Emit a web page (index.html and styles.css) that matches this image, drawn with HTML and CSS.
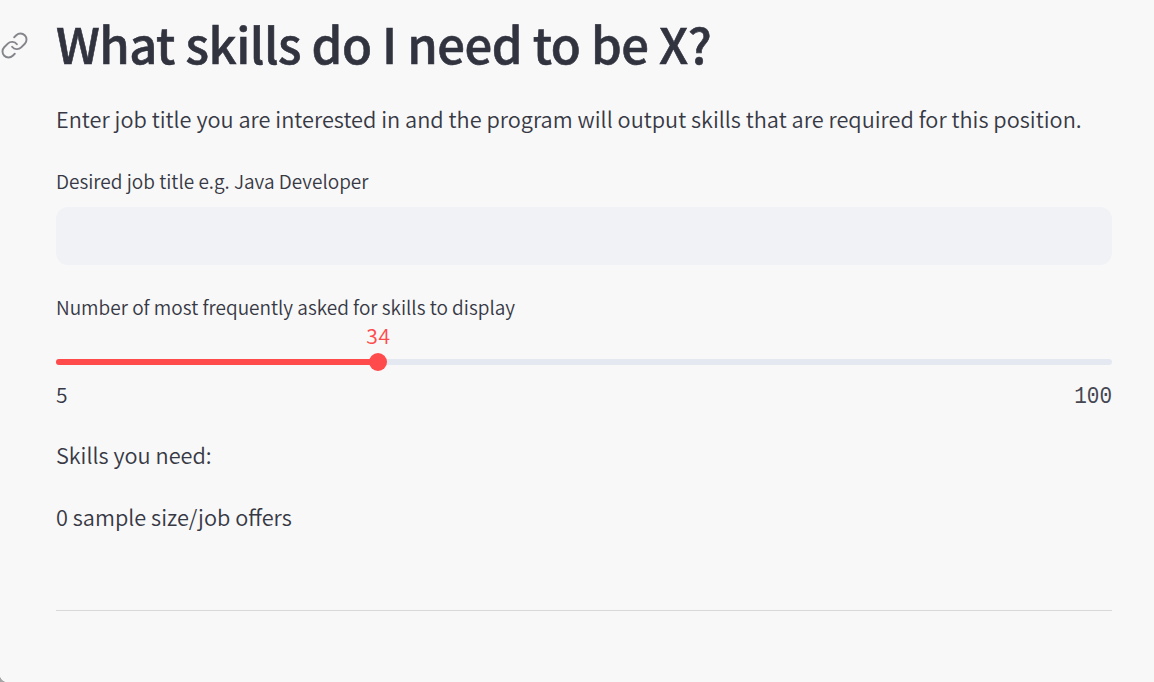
FILE: index.html
```html
<!DOCTYPE html>
<html lang="en">
<head>
<meta charset="utf-8">
<title>What skills do I need to be X?</title>
<link rel="stylesheet" href="styles.css">
</head>
<body>
<main class="page">
  <header class="heading">
    <a class="anchor" href="#top" aria-label="Link to heading">
      <svg viewBox="0 0 24 24" width="29" height="29"><path d="M10 13a5 5 0 0 0 7.54.54l3-3a5 5 0 0 0-7.07-7.07l-1.72 1.71"/><path d="M14 11a5 5 0 0 0-7.54-.54l-3 3a5 5 0 0 0 7.07 7.07l1.71-1.71"/></svg>
    </a>
    <h1 class="title" id="top"><span>What skills do I need to be X?</span></h1>
  </header>
  <p class="text intro"><span>Enter job title you are interested in and the program will output skills that are required for this position.</span></p>
  <label class="label" for="job"><span>Desired job title e.g. Java Developer</span></label>
  <input class="field" id="job" type="text">
  <div class="label label-slider"><span>Number of most frequently asked for skills to display</span></div>
  <div class="slider">
    <div class="value-row"><span class="value">34</span></div>
    <div class="track"><div class="fill"></div><div class="thumb"></div></div>
    <div class="limits"><span class="min">5</span><span class="max">100</span></div>
  </div>
  <p class="text skills"><span>Skills you need:</span></p>
  <p class="text sample"><span>0 sample size/job offers</span></p>
  <hr class="divider">
</main>
<div class="corner"></div>
</body>
</html>
```
FILE: styles.css
```css
* { box-sizing: border-box; }
body {
  margin: 0;
  height: 682px;
  overflow: hidden;
  background: #f8f8f8;
  color: #373945;
  font-family: "Noto Sans CJK JP", "Noto Sans", sans-serif;
  font-weight: 350;
}
.page { display: flex; flex-direction: column; padding: 3px 42px 0 56px; }
.heading { display: flex; align-items: center; height: 80px; margin-left: -56px; }
.anchor { display: flex; width: 56px; height: 29px; margin-top: 4px; }
.anchor svg { fill: none; stroke: #85868c; stroke-width: 1.6; stroke-linecap: round; stroke-linejoin: round; }
.title { margin: 0; color: #31333f; font-size: 49px; font-weight: 500; line-height: 80px; letter-spacing: -0.5px; white-space: nowrap; -webkit-text-stroke: 0.6px #31333f; }
.text { margin: 0; font-size: 21.73px; line-height: 38px; white-space: nowrap; }
.intro { margin-top: 17px; }
.label { margin-top: 26px; font-size: 19.02px; line-height: 34px; }
.field { width: 100%; height: 58px; margin-top: 9px; border: 0; border-radius: 12px; background: #f1f2f6; }
.label-slider { margin-top: 25px; }
.slider { display: flex; flex-direction: column; }
.value-row { display: flex; justify-content: center; width: 645px; height: 35px; }
.value { color: #ff4b4b; font-size: 21px; line-height: 22px; letter-spacing: 0.6px; }
.track { position: relative; height: 6px; border-radius: 3px; background: #e4e8f1; }
.fill { width: 322px; height: 6px; border-radius: 3px; background: #ff4b4b; }
.thumb { position: absolute; left: 313px; top: -6px; width: 18px; height: 18px; border-radius: 50%; background: #ff4b4b; }
.limits { display: flex; justify-content: space-between; height: 32px; margin-top: 14px; font-size: 21px; line-height: 30px; }
.max { color: #454752; font-family: "Liberation Mono", monospace; line-height: 36px; transform: scaleY(1.1); transform-origin: 50% 50%; }
.skills { margin-top: 25px; }
.sample { margin-top: 24px; }
.divider { width: 100%; height: 1px; margin: 74px 0 0; border: 0; background: #d8d8da; }
.corner { position: absolute; left: 0; bottom: 0; width: 8px; height: 8px; background: radial-gradient(circle at 8px 0, #f8f8f8 8px, #a5a5a5 8.7px); }
```
